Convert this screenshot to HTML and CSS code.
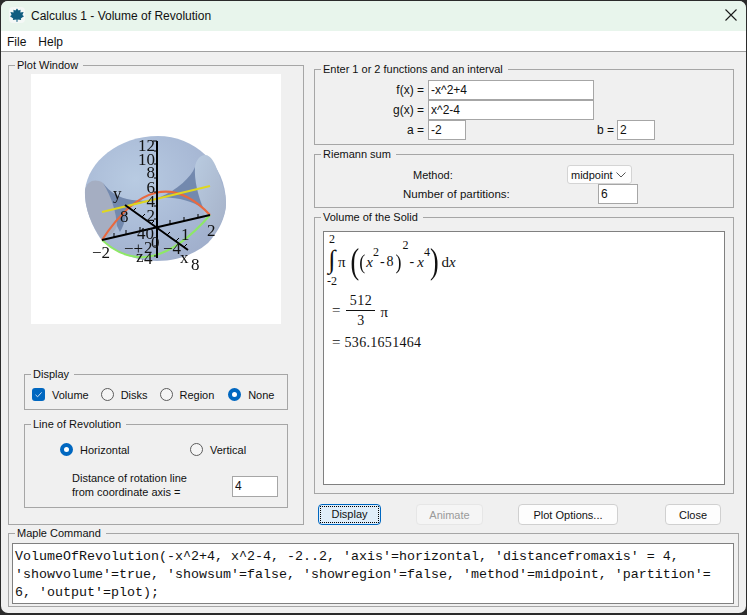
FILE: index.html
```html
<!DOCTYPE html>
<html lang="en">
<head>
    <meta charset="UTF-8">
    <meta name="viewport" content="width=device-width, initial-scale=1.0">
    <title>Calculus 1 - Volume of Revolution</title>
    <link rel="stylesheet" href="styles.css">
</head>
<body>
<div class="window">
    <div class="titlebar">
        <span class="app-icon">
            <svg width="16" height="16" viewBox="0 0 16 16">
                <path d="M8 1.5 L9.6 3.6 L11.6 2.8 L11.4 5.6 L14.6 5 L13.4 8 L15 9.2 L11.8 11.4 L12.2 13 L8.6 12.4 L8.4 15 L7.6 15 L7.4 12.4 L3.8 13 L4.2 11.4 L1 9.2 L2.6 8 L1.4 5 L4.6 5.6 L4.4 2.8 L6.4 3.6 Z" fill="#0f5d80"/>
            </svg>
        </span>
        <span class="title-text">Calculus 1 - Volume of Revolution</span>
        <svg class="close-x" width="12" height="12" viewBox="0 0 12 12">
            <path d="M0.5 0.5 L11.5 11.5 M11.5 0.5 L0.5 11.5" stroke="#1a1a1a" stroke-width="1.1" fill="none"/>
        </svg>
    </div>
    <div class="menubar">
        <span>File</span>
        <span>Help</span>
    </div>

    <div class="content">
        <fieldset class="group plot-group">
            <legend>Plot Window</legend>
            <div class="plot-body">
                <svg class="plot" width="250" height="250" viewBox="31 74 250 250">
                    <defs>
                        <radialGradient id="bodyFill" cx="0.36" cy="0.35" r="0.8">
                            <stop offset="0" stop-color="#b8cbe2"/>
                            <stop offset="0.55" stop-color="#a9bad6"/>
                            <stop offset="1" stop-color="#9eacc9"/>
                        </radialGradient>
                        <linearGradient id="lobeFill" x1="0" y1="0" x2="1" y2="1">
                            <stop offset="0" stop-color="#b9cbe0"/>
                            <stop offset="1" stop-color="#a5b1c8"/>
                        </linearGradient>
                    </defs>
                    <g class="plot-art">
                        <!-- solid -->
                        <path d="M85 190 C88 162 118 136 158 136 C194 136 226 164 226 203 C226 218 218 232 208 243 C194 255 176 261 157 261 C136 261 112 252 100 238 C92 226 84 208 85 190 Z" fill="url(#bodyFill)"/>
                        <path d="M85 190 C87 181 95 178 103 183 C110 192 116 212 117 225 C116 231 110 236 102 240 C92 226 84 208 85 190 Z" fill="#a5aec2"/>
                        <path d="M103 183 C110 192 118 198 132 200 C142 201 150 201 156 200 L128 206 C126 212 126 222 120 232 L117 226 C116 212 112 198 103 183 Z" fill="#7389ae"/>
                        <path d="M195 167 C196 160 200 155 205 155 C211 155 215 163 218 172 C222 184 226 194 226 203 C226 214 220 226 212 236 C207 224 203 214 203 206 C198 195 194 180 195 167 Z" fill="url(#lobeFill)"/>
                        <path d="M195 167 C191 177 178 190 158 198 C172 196 190 200 203 208 C198 195 194 180 195 167 Z" fill="#7389ae"/>
                        <!-- curves -->
                        <path d="M102 240 Q156 158 210 215" fill="none" stroke="#e9683e" stroke-width="2"/>
                        <path d="M102 240 Q150 284 210 215" fill="none" stroke="#8ee866" stroke-width="2"/>
                        <path d="M102 212 L210 186" stroke="#dfd71f" stroke-width="2"/>
                        <!-- axes -->
                        <path d="M157 141 V258 M102 240 L210 215 M125 205 L188 250" stroke="#000" stroke-width="2" fill="none"/>
                        <path d="M153 141 H157 M154 151 H157 M154 164 H157 M154 178 H157 M154 192 H157 M154 206 H157 M154 219 H157 M154 246 H157 M154 256 H157" stroke="#000" stroke-width="1"/>
                        <path d="M114 237 V233 M126 234 V230 M140 231 V227 M170 224 V220 M184 221 V217 M198 218 V214 M133 211 L136 208 M142 217 L145 214 M151 224 L154 221 M167 235 L170 232 M176 241 L179 238 M184 247 L187 244" stroke="#000" stroke-width="1"/>
                        <g class="plot-labels">
                            <text x="155" y="151" text-anchor="end">12</text>
                            <text x="155" y="165" text-anchor="end">10</text>
                            <text x="155" y="178" text-anchor="end">8</text>
                            <text x="155" y="193" text-anchor="end">6</text>
                            <text x="155" y="207" text-anchor="end">4</text>
                            <text x="155" y="221" text-anchor="end">2</text>
                            <text x="113" y="199">y</text>
                            <text x="120" y="222">8</text>
                            <text x="137" y="239">40</text>
                            <text x="92" y="258">−2</text>
                            <text x="207" y="236">2</text>
                            <text x="181" y="240">1</text>
                            <text x="163" y="254">−4</text>
                            <text x="124" y="254">−+</text>
                            <text x="144" y="253">2</text>
                            <text x="151" y="248">0</text>
                            <text x="136" y="262">z</text>
                            <text x="144" y="264">4</text>
                            <text x="180" y="263">x</text>
                            <text x="191" y="270">8</text>
                        </g>
                    </g>
                </svg>

                <fieldset class="group display-group">
                    <legend>Display</legend>
                    <div class="option-row">
                        <label class="option wide"><span class="check"><svg width="13" height="13" viewBox="0 0 13 13"><path d="M3.5 6.8 L5.6 8.8 L9.6 4.4" fill="none" stroke="#cfe2f5" stroke-width="1"/></svg></span>Volume</label>
                        <label class="option"><span class="radio"></span>Disks</label>
                        <label class="option wide"><span class="radio"></span>Region</label>
                        <label class="option"><span class="radio on"></span>None</label>
                    </div>
                </fieldset>

                <fieldset class="group line-group">
                    <legend>Line of Revolution</legend>
                    <div class="line-row">
                        <label class="option axis"><span class="radio on"></span>Horizontal</label>
                        <label class="option"><span class="radio"></span>Vertical</label>
                    </div>
                    <div class="distance-row">
                        <span class="distance-label">Distance of rotation line<br>from coordinate axis =</span>
                        <input class="field distance" value="4">
                    </div>
                </fieldset>
            </div>
        </fieldset>

        <div class="right-col">
            <fieldset class="group enter-group">
                <legend>Enter 1 or 2 functions and an interval</legend>
                <div class="fn-row"><span class="fn-label">f(x) =</span><input class="field fn" value="-x^2+4"></div>
                <div class="fn-row"><span class="fn-label">g(x) =</span><input class="field fn" value="x^2-4"></div>
                <div class="fn-row">
                    <span class="fn-label">a =</span><input class="field bound" value="-2">
                    <span class="b-label">b =</span><input class="field bound" value="2">
                </div>
            </fieldset>

            <fieldset class="group riemann-group">
                <legend>Riemann sum</legend>
                <div class="method-row">
                    <span class="method-label">Method:</span>
                    <div class="combo">midpoint
                        <svg width="10" height="6" viewBox="0 0 10 6"><path d="M0.5 0.5 L5 5 L9.5 0.5" fill="none" stroke="#555" stroke-width="1"/></svg>
                    </div>
                </div>
                <div class="parts-row">
                    <span class="parts-label">Number of partitions:</span>
                    <input class="field parts" value="6">
                </div>
            </fieldset>

            <fieldset class="group volume-group">
                <legend>Volume of the Solid</legend>
                <div class="math-box">
                    <div class="math-integral">
                        <div class="limits"><span>2</span><span class="int-sign">∫</span><span>-2</span></div>
                        <span class="pi">π</span>
                        <span class="paren big">(</span>
                        <span class="paren mid">(</span>
                        <i class="var">x</i><span class="sup one">2</span>
                        <span class="op">-</span><span class="num">8</span>
                        <span class="paren mid close">)</span><span class="sup two">2</span>
                        <span class="op">-</span>
                        <i class="var">x</i><span class="sup one">4</span>
                        <span class="paren big">)</span>
                        <span class="dx">d<i>x</i></span>
                    </div>
                    <div class="math-frac">
                        <span class="eq">=</span>
                        <span class="frac"><span class="frac-top">512</span><span class="frac-bottom">3</span></span>
                        <span class="frac-pi">π</span>
                    </div>
                    <div class="math-value"><span class="eq">=</span> 536.1651464</div>
                </div>
            </fieldset>

            <div class="buttons">
                <button class="btn btn-display"><span>Display</span></button>
                <button class="btn btn-animate" disabled>Animate</button>
                <button class="btn btn-options">Plot Options...</button>
                <button class="btn btn-close">Close</button>
            </div>
        </div>

        <fieldset class="group maple-group">
            <legend>Maple Command</legend>
            <div class="command">VolumeOfRevolution(-x^2+4, x^2-4, -2..2, 'axis'=horizontal, 'distancefromaxis' = 4,<br>'showvolume'=true, 'showsum'=false, 'showregion'=false, 'method'=midpoint, 'partition'=<br>6, 'output'=plot);</div>
        </fieldset>
    </div>
</div>
</body>
</html>
```

FILE: styles.css
```css
* {
    box-sizing: border-box;
}
html, body {
    margin: 0;
    height: 100%;
    background-color: #2b2b2b;
}
body {
    padding: 1px 1px 2px 1px;
    font-family: "Liberation Sans", Arial, sans-serif;
    font-size: 11px;
    color: #111;
}
.window {
    height: 612px;
    background-color: #f0f0f0;
    border-radius: 7px;
    overflow: hidden;
}
.titlebar {
    display: flex;
    align-items: center;
    height: 30px;
    padding: 0 9px 0 8px;
    background-color: #e8f5ec;
    font-size: 12px;
}
.app-icon {
    display: flex;
    width: 16px;
    height: 16px;
    margin-bottom: 2px;
    background-color: #f4f8f6;
    border-radius: 4px;
}
.title-text {
    margin-left: 6px;
    flex: 1;
}
.close-x {
    margin-bottom: 2px;
}
.menubar {
    display: flex;
    gap: 12px;
    height: 21px;
    padding: 1px 6px 0;
    align-items: center;
    background-color: #fff;
    border-bottom: 1px solid #a0a0a0;
    font-size: 12px;
}
.content {
    display: grid;
    grid-template-columns: 296px 420px;
    column-gap: 10px;
    row-gap: 2px;
    padding: 7px 0 0 7px;
}

/* group boxes */
.group {
    margin: 0;
    padding: 0;
    min-width: 0;
    border: 1px solid #a6a6a6;
}
.group legend {
    margin-left: 6px;
    padding: 0 5px 0 2px;
    line-height: 13px;
}
.plot-group {
    height: 466px;
}
.plot-body {
    padding: 2px 15px 0;
}
.plot {
    display: block;
    margin-left: 7px;
    background-color: #fff;
}
.plot-art {
    filter: blur(0.35px);
}
.plot-labels text {
    font-family: "Liberation Serif", serif;
    font-size: 17px;
    fill: #111;
}
.display-group {
    height: 42px;
    margin-top: 44px;
}
.line-group {
    height: 90px;
    margin-top: 8px;
}
.option-row {
    display: flex;
    padding: 7px 0 0 7px;
}
.option {
    display: flex;
    align-items: center;
    gap: 7px;
    width: 60px;
}
.option.wide {
    width: 70px;
}
.option.axis {
    width: 130px;
}
.check {
    flex: none;
    width: 13px;
    height: 13px;
    background-color: #0067c0;
    border-radius: 3px;
}
.check svg {
    display: block;
}
.radio {
    flex: none;
    width: 13px;
    height: 13px;
    border: 1px solid #5c5c5c;
    border-radius: 50%;
    background-color: #f5f5f5;
}
.radio.on {
    border: 4px solid #0067c0;
    background-color: #fff;
}
.line-row {
    display: flex;
    padding: 12px 0 0 35px;
}
.distance-row {
    display: flex;
    align-items: center;
    padding: 15px 0 0 47px;
}
.distance-label {
    width: 160px;
    line-height: 14px;
}
.field {
    height: 20px;
    padding: 0 0 0 2px;
    margin: 0;
    border: 1px solid #a6a6a6;
    border-radius: 0;
    background-color: #fff;
    font-family: inherit;
    font-size: 12px;
    color: #111;
    outline: none;
}
.distance {
    width: 46px;
    height: 21px;
    margin-top: 2px;
}

/* right column */
.right-col {
    display: flex;
    flex-direction: column;
    padding-top: 4px;
}
.enter-group {
    height: 82px;
}
.riemann-group {
    height: 60px;
    margin-top: 3px;
}
.volume-group {
    height: 283px;
    margin-top: 3px;
}
.enter-group .fn-row:first-of-type {
    margin-top: 4px;
}
.fn-row {
    display: flex;
    align-items: center;
    height: 20px;
    font-size: 12px;
}
.fn-label {
    width: 113px;
    padding-right: 4px;
    text-align: right;
}
.fn {
    width: 166px;
}
.bound {
    width: 38px;
}
.b-label {
    width: 151px;
    padding-right: 3px;
    text-align: right;
}
.method-row {
    display: flex;
    align-items: center;
    height: 19px;
    margin-top: 4px;
    padding-left: 98px;
}
.method-label {
    width: 154px;
}
.combo {
    display: flex;
    align-items: center;
    justify-content: space-between;
    width: 65px;
    height: 19px;
    padding: 0 5px 0 3px;
    background-color: #fdfdfd;
    border: 1px solid #d4d4d4;
    border-radius: 3px;
}
.parts-row {
    display: flex;
    align-items: center;
    padding-left: 88px;
    font-size: 11.5px;
}
.parts-label {
    width: 195px;
}
.parts {
    width: 40px;
}

/* math output */
.math-box {
    height: 254px;
    margin: 7px 8px 0;
    padding: 0 0 0 8px;
    background-color: #fff;
    border: 1px solid #808080;
    font-family: "Liberation Serif", serif;
    font-size: 14px;
    color: #111;
}
.math-integral {
    display: flex;
    align-items: center;
    height: 60px;
    margin-left: -6px;
}
.limits {
    display: flex;
    flex-direction: column;
    align-items: center;
    width: 12px;
    margin-bottom: 4px;
    font-size: 12px;
    line-height: 12px;
}
.int-sign {
    font-size: 26px;
    line-height: 30px;
}
.pi {
    margin-right: 5px;
    font-size: 15px;
}
.paren.big {
    font-size: 26px;
    transform: scaleY(1.4);
}
.paren.mid {
    font-size: 18px;
    transform: scaleY(1.2);
}
.paren.close {
    margin-left: 2px;
}
.var {
    margin-left: 1px;
    font-size: 15px;
}
.sup {
    font-size: 12px;
}
.sup.one {
    margin-bottom: 20px;
}
.sup.two {
    margin-left: 1px;
    margin-bottom: 34px;
}
.op {
    margin: 0 2px 0 1px;
}
.dx {
    margin-left: 3px;
    font-size: 15px;
}
.math-frac {
    display: flex;
    align-items: center;
    gap: 6px;
    height: 40px;
    margin-top: -2px;
}
.eq {
    font-size: 15px;
}
.frac {
    display: flex;
    flex-direction: column;
    align-items: center;
    width: 29px;
    letter-spacing: 0.5px;
    line-height: 19px;
}
.frac-top {
    width: 100%;
    text-align: center;
    border-bottom: 1px solid #111;
}
.frac-pi {
    margin: 5px 0 0 -1px;
    font-size: 15px;
}
.math-value {
    margin-top: 3px;
    letter-spacing: 0.3px;
    line-height: 18px;
}

/* buttons */
.buttons {
    display: flex;
    margin-top: 10px;
    padding-left: 4px;
}
.btn {
    height: 21px;
    padding: 0;
    font-family: inherit;
    font-size: 11px;
    color: #111;
    background-color: #fdfdfd;
    border: 1px solid #d0d0d0;
    border-radius: 4px;
}
.btn-display {
    width: 63px;
    padding: 1px;
    background-color: #e0eefa;
    border: 1px solid #0067c0;
}
.btn-display span {
    display: block;
    height: 17px;
    line-height: 15px;
    border: 1px dotted #000;
}
.btn-animate {
    width: 67px;
    margin-left: 35px;
    color: #9a9a9a;
    background-color: #f5f5f5;
    border-color: #e6e6e6;
}
.btn-options {
    width: 100px;
    margin-left: 35px;
}
.btn-close {
    width: 56px;
    margin-left: 47px;
}

/* command */
.maple-group {
    grid-column: 1 / 3;
    width: 731px;
    height: 80px;
}
.command {
    height: 61px;
    margin: 3px 4px 0 3px;
    padding: 4px 0 0 2px;
    background-color: #fff;
    border: 1px solid #808080;
    font-family: "Liberation Mono", monospace;
    font-size: 13.33px;
    line-height: 18px;
    white-space: nowrap;
    color: #111;
}
```
